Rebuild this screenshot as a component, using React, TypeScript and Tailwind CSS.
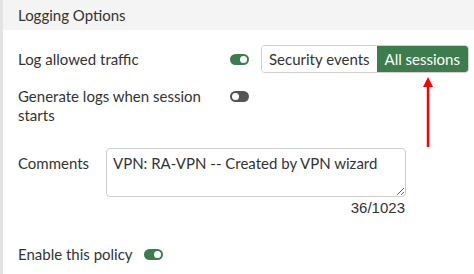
import React from 'react';

function Toggle({ on }: { on: boolean }) {
  return (
    <span
      className={`relative inline-flex h-[11px] w-[19px] shrink-0 items-center rounded-full ${on ? 'bg-[#3d7d4d]' : 'bg-[#555555]'}`}
    >
      <span
        className={`absolute h-[7px] w-[7px] rounded-full bg-white ${on ? 'right-[2px]' : 'left-[2px]'}`}
      />
    </span>
  );
}

export default function App() {
  return (
    <div className="relative h-[274px] w-[474px] overflow-hidden border-l-[3px] border-[#e3e3e3] bg-white text-[15px] leading-[19px] text-[#333] [font-family:Lato,'Noto_Sans',sans-serif]">
      <div className="flex h-[30px] items-center bg-[#f4f4f4] pl-[15px] text-[#333]">Logging Options</div>

      <div className="flex items-center pl-[15px] pt-[15px]">
        <span className="w-[212px]">Log allowed traffic</span>
        <Toggle on />
        <div className="ml-[12px] flex h-[28px] overflow-hidden rounded-[4px] border border-[#d0d0d0]">
          <span className="flex items-center bg-white px-[7px]">Security events</span>
          <span className="flex items-center bg-[#3d7d4d] px-[8px] text-white">All sessions</span>
        </div>
      </div>

      <div className="flex items-start pl-[15px] pt-[14px]">
        <span className="w-[212px]">
          Generate logs when session
          <br />
          starts
        </span>
        <span className="mt-[4px] flex">
          <Toggle on={false} />
        </span>
      </div>

      <div className="flex items-start pl-[15px] pt-[23px]">
        <span className="w-[88px] pt-[6px]">Comments</span>
        <div className="flex w-[300px] flex-col items-end">
          <textarea
            className="h-[49px] w-full resize-y rounded-[4px] border border-[#cfcfcf] px-[6px] py-[5px] text-[15px] leading-[19px] text-[#333] outline-none [font-family:Lato,sans-serif]"
            defaultValue="VPN: RA-VPN -- Created by VPN wizard"
          />
          <span className="mt-[3px] pr-[1px] text-[15px] leading-[16px] text-[#333] [font-family:'Liberation_Sans',Arial,sans-serif]">36/1023</span>
        </div>
      </div>

      <div className="flex items-center pl-[15px] pt-[29px]">
        <span className="mr-[11px]">Enable this policy</span>
        <Toggle on />
      </div>

      {/* annotation arrow */}
      <svg className="absolute left-[417px] top-[77px]" width="16" height="70" viewBox="0 0 16 70">
        <line x1="8" y1="8" x2="8" y2="70" stroke="#ff0000" strokeWidth="2.5" />
        <polygon points="8,0 3,10 13,10" fill="#ff0000" />
      </svg>
    </div>
  );
}
